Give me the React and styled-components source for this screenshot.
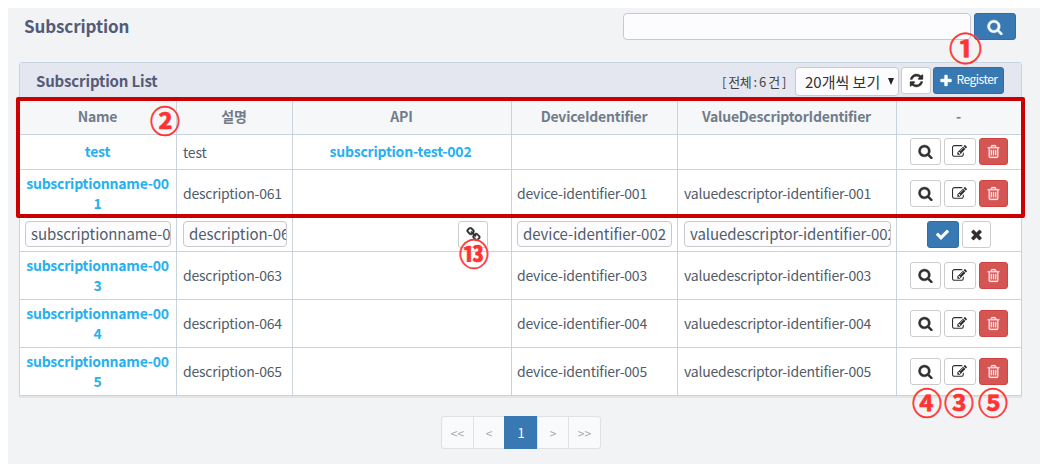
import React from "react";
import styled, { createGlobalStyle, css } from "styled-components";

const Global = createGlobalStyle`
  * { box-sizing: border-box; }
  body { margin: 0; background: #fff; font-family: "Noto Sans CJK KR", "Noto Sans", sans-serif; color: #515c6b; }
  button, input { font-family: inherit; margin: 0; }
`;

const paths = {
  search: "M1216 832q0-185-131.5-316.5t-316.5-131.5-316.5 131.5-131.5 316.5 131.5 316.5 316.5 131.5 316.5-131.5 131.5-316.5zm512 832q0 52-38 90t-90 38q-54 0-90-38l-343-342q-179 124-399 124-143 0-273.5-55.5t-225-150-150-225-55.5-273.5 55.5-273.5 150-225 225-150 273.5-55.5 273.5 55.5 225 150 150 225 55.5 273.5q0 220-124 399l343 343q37 37 37 90z",
  edit: "M888 1184l116-116-152-152-116 116v56h96v96h56zm440-720q-16-16-33 1l-350 350q-17 17-1 33t33-1l350-350q17-17 1-33zm80 594v190q0 119-84.5 203.5t-203.5 84.5h-832q-119 0-203.5-84.5t-84.5-203.5v-832q0-119 84.5-203.5t203.5-84.5h832q63 0 117 25 15 7 18 23 3 17-9 29l-49 49q-14 14-32 8-23-6-45-6h-832q-66 0-113 47t-47 113v832q0 66 47 113t113 47h832q66 0 113-47t47-113v-126q0-13 9-22l64-64q15-15 35-7t20 29zm-96-738l288 288-672 672h-288v-288zm444 132l-92 92-288-288 92-92q28-28 68-28t68 28l152 152q28 28 28 68t-28 68z",
  trash: "M704 736v576q0 14-9 23t-23 9h-64q-14 0-23-9t-9-23v-576q0-14 9-23t23-9h64q14 0 23 9t9 23zm256 0v576q0 14-9 23t-23 9h-64q-14 0-23-9t-9-23v-576q0-14 9-23t23-9h64q14 0 23 9t9 23zm256 0v576q0 14-9 23t-23 9h-64q-14 0-23-9t-9-23v-576q0-14 9-23t23-9h64q14 0 23 9t9 23zm128 724v-948h-896v948q0 22 7 40.5t14.5 27 10.5 8.5h832q3 0 10.5-8.5t14.5-27 7-40.5zm-672-1076h448l-48-117q-7-9-17-11h-317q-10 2-17 11zm928 32v64q0 14-9 23t-23 9h-96v948q0 83-47 143.5t-113 60.5h-832q-66 0-113-58.5t-47-141.5v-952h-96q-14 0-23-9t-9-23v-64q0-14 9-23t23-9h309l70-167q15-37 54-63t79-26h320q40 0 79 26t54 63l70 167h309q14 0 23 9t9 23z",
  refresh: "M1639 1056q0 5-1 7-64 268-268 434.5t-478 166.5q-146 0-282.5-55t-243.5-157l-129 129q-19 19-45 19t-45-19-19-45v-448q0-26 19-45t45-19h448q26 0 45 19t19 45-19 45l-137 137q71 66 161 102t187 36q134 0 250-65t186-179q11-17 53-117 8-23 30-23h192q13 0 22.5 9.5t9.5 22.5zm25-800v448q0 26-19 45t-45 19h-448q-26 0-45-19t-19-45 19-45l138-138q-148-137-349-137-134 0-250 65t-186 179q-11 17-53 117-8 23-30 23h-199q-13 0-22.5-9.5t-9.5-22.5v-7q65-268 270-434.5t480-166.5q146 0 284 55.5t245 156.5l130-129q19-19 45-19t45 19 19 45z",
  plus: "M1600 736v192q0 40-28 68t-68 28h-416v416q0 40-28 68t-68 28h-192q-40 0-68-28t-28-68v-416h-416q-40 0-68-28t-28-68v-192q0-40 28-68t68-28h416v-416q0-40 28-68t68-28h192q40 0 68 28t28 68v416h416q40 0 68 28t28 68z",
  check: "M1671 566q0 40-28 68l-724 724-136 136q-28 28-68 28t-68-28l-136-136-362-362q-28-28-28-68t28-68l136-136q28-28 68-28t68 28l294 295 656-657q28-28 68-28t68 28l136 136q28 28 28 68z",
  times: "M1490 1322q0 40-28 68l-136 136q-28 28-68 28t-68-28l-294-294-294 294q-28 28-68 28t-68-28l-136-136q-28-28-28-68t28-68l294-294-294-294q-28-28-28-68t28-68l136-136q28-28 68-28t68 28l294 294 294-294q28-28 68-28t68 28l136 136q28 28 28 68t-28 68l-294 294 294 294q28 28 28 68z",
  link: "M1520 1216q0-40-28-68l-208-208q-28-28-68-28-42 0-72 32 3 3 19 18.5t21.5 21.5 15 19 13 25.5 3.5 27.5q0 40-28 68t-68 28q-15 0-27.5-3.5t-25.5-13-19-15-21.5-21.5-18.5-19q-33 31-33 73 0 40 28 68l206 207q27 27 68 27 40 0 68-26l147-146q28-28 28-67zm-703-705q0-40-28-68l-206-207q-28-28-68-28-39 0-68 27l-147 146q-28 28-28 67 0 40 28 68l208 208q27 27 68 27 42 0 72-31-3-3-19-18.5t-21.5-21.5-15-19-13-25.5-3.5-27.5q0-40 28-68t68-28q15 0 27.5 3.5t25.5 13 19 15 21.5 21.5 18.5 19q33-31 33-73zm895 705q0 120-85 203l-147 146q-83 83-203 83-121 0-204-85l-206-207q-83-83-83-203 0-123 88-209l-88-88q-86 88-208 88-120 0-204-84l-208-208q-84-84-84-204t85-203l147-146q83-83 203-83 121 0 204 85l206 207q83 83 83 203 0 123-88 209l88 88q86-88 208-88 120 0 204 84l208 208q84 84 84 204z",
};

const Icon = ({ name, size = 15, bold = 0 }) => (
  <svg width={size} height={size} viewBox="0 0 1792 1792" fill="currentColor" stroke="currentColor" strokeWidth={bold} aria-hidden="true">
    <path d={paths[name]} />
  </svg>
);

const Screen = styled.div`
  position: relative;
  width: 1040px;
  height: 466px;
  padding: 8px 0 2px 8px;
  overflow: hidden;
`;
const Page = styled.main`
  height: 456px;
  background: #f1f3f5;
  padding: 5px 18px 0 11px;
`;
const TopBar = styled.header`
  display: flex;
  height: 27px;
  padding: 0 6px 0 5px;
`;
const Title = styled.h1`
  flex: 1;
  margin: 0;
  font-size: 17px;
  line-height: 26px;
  font-weight: 700;
  letter-spacing: -0.1px;
  color: #545a78;
`;
const SearchInput = styled.input`
  width: 348px;
  height: 27px;
  margin-right: 3px;
  border: 1px solid #c6cacf;
  border-radius: 4px;
  background: #fcfcfe;
`;

const tones = {
  plain: css`background: #fff; border-color: #ccc; color: #2f2f2f;`,
  primary: css`background: #3879b3; border-color: #2f6da4; color: #fff;`,
  danger: css`background: #d55553; border-color: #cf4541; color: #ffe9ee;`,
};
const Button = styled.button`
  display: inline-flex;
  flex: none;
  align-items: center;
  justify-content: center;
  gap: 3px;
  width: ${(p) => p.$w}px;
  height: ${(p) => p.$h || 27}px;
  padding: 0;
  border: 1px solid;
  border-radius: 3px;
  font-size: 12px;
  line-height: 1;
  letter-spacing: -0.5px;
  ${(p) => tones[p.$tone || "plain"]}
`;
const ButtonLabel = styled.span`
  padding-bottom: 3px;
`;
const Panel = styled.section`
  width: 1003px;
  height: 334px;
  margin-top: 22px;
  border: 1px solid #c9d3dd;
  border-radius: 3px 3px 0 0;
  background: #fff;
  box-shadow: 0 2px 0 #e3e6e9;
`;
const PanelHead = styled.div`
  display: flex;
  align-items: flex-start;
  height: 36px;
  padding: 4px 17px 0 16px;
  background: #e4e7ef;
`;
const PanelTitle = styled.h2`
  flex: 1;
  margin: 0;
  font-size: 15px;
  line-height: 28px;
  font-weight: 700;
  letter-spacing: -0.15px;
  color: #545a78;
`;
const Total = styled.span`
  margin-right: 9px;
  font-size: 13px;
  line-height: 30px;
  letter-spacing: -0.5px;
  color: #444;
  white-space: pre;
`;
const PageSize = styled.div`
  display: flex;
  justify-content: space-between;
  width: 104px;
  height: 29px;
  margin-right: 2px;
  padding: 0 4px 0 9px;
  border: 1px solid #c6cacf;
  border-radius: 4px;
  background: #fcfcfe;
  color: #333;
  font-size: 15px;
  line-height: 28px;
  white-space: nowrap;
`;
const Caret = styled.span`
  align-self: center;
  margin-top: -1px;
  border: solid transparent;
  border-width: 7px 3.5px 0;
  border-top-color: #222;
`;
const HeadActions = styled.div`
  display: flex;
  gap: 2px;
`;

const Row = styled.div`
  display: grid;
  grid-template-columns: 157px 116px 219px 166px 219px 124px;
  height: ${(p) => p.$h}px;
  border-bottom: ${(p) => (p.$last ? 0 : 1)}px solid #c9d3dd;
  ${(p) => p.$head && css`
    background: #f5f7f9;
    color: #727c89;
    font-weight: 700;
    text-align: center;
  `}
`;
const Cell = styled.div`
  display: flex;
  align-items: center;
  justify-content: ${(p) => (p.$center ? "center" : "flex-start")};
  min-width: 0;
  padding: 0 5px 1px;
  padding-left: ${(p) => p.$pl ?? (p.$center ? 4 : 6)}px;
  font-size: 14px;
  line-height: 20px;
  letter-spacing: -0.22px;
  white-space: nowrap;
  &:not(:last-child) { border-right: 1px solid #c9d3dd; }
`;
const Link = styled.a`
  font-weight: 700;
  font-size: 14px;
  color: #25b0f0;
  text-align: center;
  white-space: normal;
  word-break: break-all;
  padding-bottom: 1px;
`;
const Field = styled.input`
  width: 100%;
  min-width: 0;
  height: 26px;
  padding: 0 0 1px 5px;
  border: 1px solid #c6cacf;
  border-radius: 4px;
  background: #fcfcfe;
  color: #515c6b;
  font-size: 15px;
  letter-spacing: -0.06px;
`;
const ApiTools = styled.div`
  width: 100%;
  display: flex;
  justify-content: flex-end;
  padding-right: 18px;
`;
const Actions = styled.div`
  display: flex;
  gap: 3px;
`;
const Pager = styled.nav`
  display: flex;
  justify-content: center;
  margin: 20px 0 0 1px;
`;
const PageItem = styled.span`
  width: ${(p) => p.$w}px;
  height: 33px;
  border: 1px solid #e0e1e3;
  border-right-width: ${(p) => (p.$end ? 1 : 0)}px;
  border-radius: ${(p) => p.$r || 0};
  background: #f9fafc;
  color: #aaa;
  font-size: 12px;
  line-height: 31px;
  text-align: center;
  ${(p) => p.$active && css`
    background: #3879b3;
    border-color: #3879b3;
    color: #fff;
    font-size: 13px;
  `}
`;
const Highlight = styled.div`
  position: absolute;
  left: 16px;
  top: 97px;
  width: 1009px;
  height: 121px;
  border: 4px solid #cb0000;
  border-radius: 2px;
`;
const Marker = styled.span`
  position: absolute;
  left: ${(p) => p.$x - 20}px;
  top: ${(p) => p.$y - 20}px;
  width: 40px;
  height: 40px;
  line-height: 40px;
  text-align: center;
  font-size: ${(p) => p.$size || 30}px;
  font-weight: 700;
  color: #ff3333;
  -webkit-text-stroke: 0.6px #ff3333;
`;

const rows = [
  { name: "test", desc: "test", api: "subscription-test-002", h: 35 },
  { name: "subscriptionname-001", desc: "description-061", device: "device-identifier-001", value: "valuedescriptor-identifier-001", h: 48 },
  { editing: true, name: "subscriptionname-002", desc: "description-062", device: "device-identifier-002", value: "valuedescriptor-identifier-002", h: 34 },
  { name: "subscriptionname-003", desc: "description-063", device: "device-identifier-003", value: "valuedescriptor-identifier-003", h: 48 },
  { name: "subscriptionname-004", desc: "description-064", device: "device-identifier-004", value: "valuedescriptor-identifier-004", h: 48 },
  { name: "subscriptionname-005", desc: "description-065", device: "device-identifier-005", value: "valuedescriptor-identifier-005", h: 47, last: true },
];

const markers = [
  { t: "①", x: 965.5, y: 47, size: 33 },
  { t: "②", x: 165, y: 119 },
  { t: "⑬", x: 474, y: 252 },
  { t: "④", x: 927, y: 401 },
  { t: "③", x: 959, y: 401 },
  { t: "⑤", x: 993, y: 401 },
];

const ViewRow = ({ row }) => (
  <Row $h={row.h} $last={row.last}>
    <Cell $center><Link>{row.name}</Link></Cell>
    <Cell>{row.desc}</Cell>
    <Cell $center $pl={2}><Link>{row.api}</Link></Cell>
    <Cell $pl={5}>{row.device}</Cell>
    <Cell>{row.value}</Cell>
    <Cell $center>
      <Actions>
        <Button $w={31} aria-label="view"><Icon name="search" bold={50} /></Button>
        <Button $w={32} aria-label="edit"><Icon name="edit" /></Button>
        <Button $w={29} $tone="danger" aria-label="delete"><Icon name="trash" bold={30} /></Button>
      </Actions>
    </Cell>
  </Row>
);

const EditRow = ({ row }) => (
  <Row $h={row.h}>
    <Cell $pl={5}><Field readOnly value={row.name} /></Cell>
    <Cell><Field readOnly value={row.desc} /></Cell>
    <Cell><ApiTools><Button $w={30} aria-label="link"><Icon name="link" bold={50} /></Button></ApiTools></Cell>
    <Cell $pl={5}><Field readOnly value={row.device} /></Cell>
    <Cell><Field readOnly value={row.value} /></Cell>
    <Cell $center>
      <Actions>
        <Button $w={32} $tone="primary" aria-label="save"><Icon name="check" /></Button>
        <Button $w={29} aria-label="cancel"><Icon name="times" bold={50} /></Button>
      </Actions>
    </Cell>
  </Row>
);

export default function App() {
  return (
    <Screen>
      <Global />
      <Page>
        <TopBar>
          <Title>Subscription</Title>
          <SearchInput />
          <Button $w={42} $tone="primary" aria-label="search"><Icon name="search" size={16} bold={60} /></Button>
        </TopBar>
        <Panel>
          <PanelHead>
            <PanelTitle>Subscription List</PanelTitle>
            <Total>[ 전체 : 6 건 ]</Total>
            <PageSize>20개씩 보기<Caret /></PageSize>
            <HeadActions>
              <Button $w={30} aria-label="refresh"><Icon name="refresh" bold={50} /></Button>
              <Button $w={71} $tone="primary"><Icon name="plus" size={14} bold={50} /><ButtonLabel>Register</ButtonLabel></Button>
            </HeadActions>
          </PanelHead>
          <Row $h={36} $head>
            <Cell $center>Name</Cell>
            <Cell $center>설명</Cell>
            <Cell $center>API</Cell>
            <Cell $center>DeviceIdentifier</Cell>
            <Cell $center>ValueDescriptorIdentifier</Cell>
            <Cell $center>-</Cell>
          </Row>
          {rows.map((row) => row.editing ? <EditRow key={row.name} row={row} /> : <ViewRow key={row.name} row={row} />)}
        </Panel>
        <Pager>
          <PageItem $w={32} $r="3px 0 0 3px">&lt;&lt;</PageItem>
          <PageItem $w={31}>&lt;</PageItem>
          <PageItem $w={33} $active>1</PageItem>
          <PageItem $w={31}>&gt;</PageItem>
          <PageItem $w={33} $end $r="0 3px 3px 0">&gt;&gt;</PageItem>
        </Pager>
      </Page>
      <Highlight />
      {markers.map((m) => <Marker key={m.t} $x={m.x} $y={m.y} $size={m.size}>{m.t}</Marker>)}
    </Screen>
  );
}
